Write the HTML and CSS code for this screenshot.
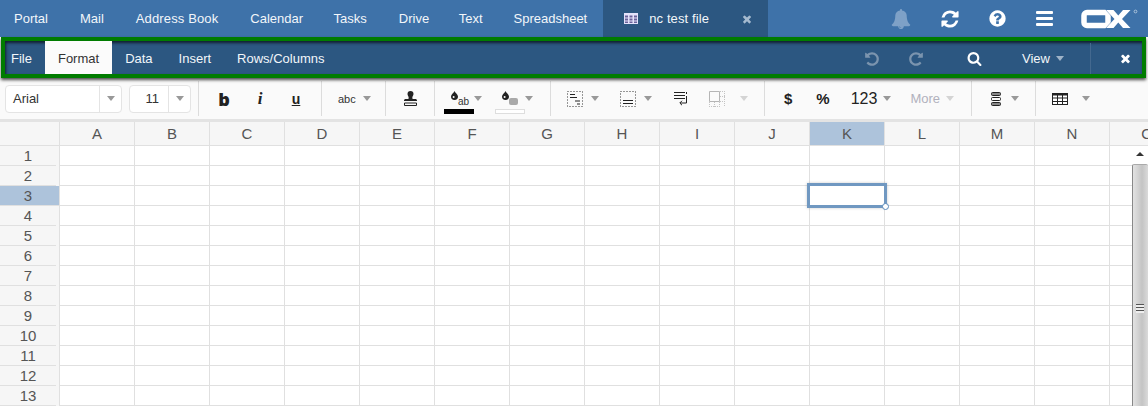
FILE: index.html
```html
<!DOCTYPE html>
<html lang="en">
<head>
<meta charset="utf-8">
<title>nc test file</title>
<link rel="stylesheet" href="styles.css">
</head>
<body>
<svg class="defs" width="0" height="0" aria-hidden="true">
  <symbol id="fa-sync" viewBox="0 0 1792 1792"><path d="M1639 1056q0 5-1 7-64 268-268 434.5t-478 166.5q-146 0-282.5-55t-243.5-157l-129 129q-19 19-45 19t-45-19-19-45v-448q0-26 19-45t45-19h448q26 0 45 19t19 45-19 45l-137 137q71 66 161 102t187 36q134 0 250-65t186-179q11-17 53-117 8-23 30-23h192q13 0 22.5 9.5t9.5 22.5zm25-800v448q0 26-19 45t-45 19h-448q-26 0-45-19t-19-45 19-45l138-138q-148-137-349-137-134 0-250 65t-186 179q-11 17-53 117-8 23-30 23h-199q-13 0-22.5-9.5t-9.5-22.5v-7q65-268 270-434.5t480-166.5q146 0 284 55.5t245 156.5l130-129q19-19 45-19t45 19 19 45z"/></symbol>
  <symbol id="fa-times" viewBox="0 0 1792 1792"><path d="M1490 1322q0 40-28 68l-136 136q-28 28-68 28t-68-28l-294-294-294 294q-28 28-68 28t-68-28l-136-136q-28-28-28-68t28-68l294-294-294-294q-28-28-28-68t28-68l136-136q28-28 68-28t68 28l294 294 294-294q28-28 68-28t68 28l136 136q28 28 28 68t-28 68l-294 294 294 294q28 28 28 68z"/></symbol>
  <symbol id="fa-undo" viewBox="0 0 1792 1792"><path d="M1664 896q0 156-61 298t-164 245-245 164-298 61q-172 0-327-72.5t-264-204.5q-7-10-6.5-22.5t8.5-20.5l137-138q10-9 25-9 16 2 23 12 73 95 179 147t225 52q104 0 198.5-40.5t163.5-109.5 109.5-163.5 40.5-198.5-40.5-198.5-109.5-163.5-163.5-109.5-198.5-40.5q-98 0-188 35.5t-160 101.5l137 138q31 30 14 69-17 40-59 40h-448q-26 0-45-19t-19-45v-448q0-42 40-59 39-17 69 14l130 129q107-101 244.5-156.5t284.5-55.5q156 0 298 61t245 164 164 245 61 298z"/></symbol>
  <symbol id="drop" viewBox="0 0 7 9"><path d="M3.500 0C3.800 1.500 7 3.300 7 5.600A3.500 3.400 0 0 1 0 5.600C0 3.300 3.200 1.500 3.500 0Z"/><circle cx="2.600" cy="6" r="1" fill="#fafafa"/></symbol>
</svg>

<header class="topbar">
  <nav class="apps">
    <a class="app">Portal</a><a class="app">Mail</a><a class="app app-book">Address Book</a><a class="app app-cal">Calendar</a><a class="app">Tasks</a><a class="app app-drive">Drive</a><a class="app app-text">Text</a><a class="app app-last">Spreadsheet</a>
    <div class="filetab">
      <svg class="tab-grid" width="14" height="11" viewBox="0 0 14 11"><rect width="14" height="11" fill="#e4e2fb"/><path d="M1 2.500h3v2H1zM5.500 2.500h3v2h-3zM10 2.500h3v2h-3zM1 5.500h3v2H1zM5.500 5.500h3v2h-3zM10 5.500h3v2h-3zM1 8.500h3v1.500H1zM5.500 8.500h3v1.500h-3zM10 8.500h3v1.500h-3z" fill="#6a6199"/></svg>
      <span class="filename">nc test file</span>
      <svg class="tab-close" width="12" height="12"><use href="#fa-times"/></svg>
    </div>
  </nav>
  <div class="sys">
    <svg class="sys-bell" width="20" height="20" viewBox="0 0 1792 1792"><path d="M912 1696q0-16-16-16-59 0-101.500-42.500t-42.500-101.500q0-16-16-16t-16 16q0 73 51.500 124.500t124.500 51.500q16 0 16-16zm816-288q0 52-38 90t-90 38h-448q0 106-75 181t-181 75-181-75-75-181h-448q-52 0-90-38t-38-90q50-42 91-88t85-119.500 74.500-158.500 50-206 19.500-260q0-152 117-282.500t307-158.500q-8-19-8-39 0-40 28-68t68-28 68 28 28 68q0 20-8 39 190 28 307 158.500t117 282.500q0 139 19.500 260t50 206 74.500 158.500 85 119.500 91 88z"/></svg>
    <svg class="sys-sync" width="20" height="20"><use href="#fa-sync"/></svg>
    <svg class="sys-help" width="19" height="19" viewBox="0 0 1792 1792"><path d="M1024 1376v-192q0-14-9-23t-23-9h-192q-14 0-23 9t-9 23v192q0 14 9 23t23 9h192q14 0 23-9t9-23zm256-672q0-88-55.500-163t-138.500-116-170-41q-243 0-371 213-15 24 8 42l132 100q7 6 19 6 16 0 25-12 53-68 86-92 34-24 86-24 48 0 85.500 26t37.500 59q0 38-20 61t-68 45q-63 28-115.500 86.500t-52.500 125.500v36q0 14 9 23t23 9h192q14 0 23-9t9-23q0-19 21.500-49.500t54.500-49.500q32-18 49-28.500t46-35 44.500-48 28-60.500 12.500-81zm384 192q0 209-103 385.500t-279.500 279.500-385.500 103-385.500-103-279.500-279.500-103-385.500 103-385.500 279.500-279.500 385.500-103 385.500 103 279.500 279.500 103 385.500z"/></svg>
    <div class="sys-menu"><i></i><i></i><i></i></div>
    <svg class="ox-logo" width="58" height="20" viewBox="0 0 58 20"><rect x="3" y="3.500" width="24" height="13" rx="3" fill="none" stroke="#fff" stroke-width="5.500"/><path d="M25 1h7.500l4.800 5.500L42 1h7.500L41 10l8.500 9H42l-4.700-5.500L32.500 19H25l8.500-9z" fill="#fff" stroke="#3e72a9" stroke-width="1" paint-order="stroke"/><circle cx="54.500" cy="2.500" r="1.400" fill="none" stroke="#cfdcea" stroke-width=".7"/></svg>
  </div>
</header>

<section class="ribbon">
  <div class="tabs">
    <a class="rtab rtab-file">File</a><a class="rtab rtab-on">Format</a><a class="rtab">Data</a><a class="rtab">Insert</a><a class="rtab">Rows/Columns</a>
  </div>
  <div class="ribbon-right">
    <svg class="dim" width="16" height="16"><use href="#fa-undo"/></svg>
    <svg class="dim redo" width="16" height="16"><use href="#fa-undo"/></svg>
    <svg class="rsearch" width="15" height="15" viewBox="0 0 1792 1792"><path d="M1216 832q0-185-131.500-316.500t-316.500-131.500-316.500 131.500-131.500 316.500 131.500 316.500 316.500 131.500 316.500-131.500 131.500-316.500zm512 832q0 52-38 90t-90 38q-54 0-90-38l-343-342q-179 124-399 124-143 0-273.500-55.500t-225-150-150-225-55.500-273.500 55.500-273.500 150-225 225-150 273.500-55.500 273.500 55.500 225 150 150 225 55.500 273.500q0 220-124 399l343 343q37 37 37 90z"/></svg>
    <span class="rview">View</span><span class="caret caret-light"></span>
    <div class="rclose"><svg width="13" height="13"><use href="#fa-times"/></svg></div>
  </div>
</section>

<section class="toolbar">
  <div class="group g-font">
    <div class="combo combo-name"><span class="combo-val">Arial</span><span class="combo-btn"><span class="caret"></span></span></div>
    <div class="combo combo-size"><span class="combo-val val-right">11</span><span class="combo-btn"><span class="caret"></span></span></div>
  </div>
  <div class="group g-style">
    <span class="sq t-b">b</span><span class="sq t-i">i</span><span class="sq t-u">u</span>
  </div>
  <div class="group g-abc"><span class="t-abc">abc</span><span class="caret"></span></div>
  <div class="group g-stamp">
    <svg width="13" height="15" viewBox="0 0 13 15"><path d="M6.500 0a3 3 0 0 1 3 3c0 1.500-1.200 2.200-1.200 4 0 .7.400 1 1 1h2c1 0 1.700.6 1.700 1.500v.5H0v-.5C0 8.600.7 8 1.700 8h2c.6 0 1-.3 1-1 0-1.800-1.200-2.500-1.200-4a3 3 0 0 1 3-3z" fill="#222"/><path d="M.5 12h12v2.500H.5z" fill="none" stroke="#222"/></svg>
  </div>
  <div class="group g-color">
    <div class="swatch">
      <div class="sw-icon"><svg class="sw-drop" width="7" height="9"><use href="#drop"/></svg><span class="sw-ab">ab</span></div>
      <span class="sw-bar sw-black"></span>
    </div>
    <span class="caret"></span>
    <div class="swatch sw-next">
      <div class="sw-icon"><svg class="sw-drop" width="7" height="9"><use href="#drop"/></svg><span class="sw-blob"></span></div>
      <span class="sw-bar sw-empty"></span>
    </div>
    <span class="caret"></span>
  </div>
  <div class="group g-cell">
    <svg class="ci" width="16" height="16" viewBox="0 0 16 16"><path d="M.5 .5h15v15H.5z" fill="none" stroke="#333" stroke-dasharray="1 2"/><path d="M3 3.500h5M3 6.500h7M8 10h5M10 13h3" stroke="#222" stroke-width="1.200"/></svg>
    <span class="caret c-near"></span>
    <svg class="ci ci-2" width="16" height="16" viewBox="0 0 16 16"><path d="M.5 .5h15v15H.5z" fill="none" stroke="#333" stroke-dasharray="1 2"/><path d="M3 9.500h10M3 12.500h10" stroke="#222" stroke-width="1.200"/></svg>
    <span class="caret c-near"></span>
    <svg class="ci ci-3" width="14" height="16" viewBox="0 0 14 16"><path d="M0 1.500h11M0 4.500h11M0 7.500h11" stroke="#222" stroke-width="1.100"/><path d="M12.500 1v2M12.500 5v7H6M8 9.800 5.800 12 8 14.200" fill="none" stroke="#222"/></svg>
    <svg class="ci ci-4" width="16" height="16" viewBox="0 0 16 16"><path d="M.5 .5h10v10H.5z" fill="none" stroke="#b5b5b5"/><path d="M11 .5h5M11 5.500h5M11 10.500h5M11 15.500H0M.5 11v5M5.500 11v5M10.500 11v5M15.500 0v16" fill="none" stroke="#c4c4c4" stroke-dasharray="1 1"/></svg>
    <span class="caret caret-dim c-far"></span>
  </div>
  <div class="group g-num">
    <span class="t-sym t-dollar">$</span><span class="t-sym t-pct">%</span><span class="t-123">123</span><span class="caret"></span><span class="t-more">More</span><span class="caret caret-dim"></span>
  </div>
  <div class="group g-rows">
    <svg width="10" height="14" viewBox="0 0 10 14"><rect x=".5" y=".5" width="9" height="3" rx="1" fill="#888" stroke="#222"/><rect x=".5" y="5.500" width="9" height="3" rx="1" fill="#fafafa" stroke="#222"/><rect x=".5" y="10.500" width="9" height="3" rx="1" fill="#888" stroke="#222"/></svg>
    <span class="caret"></span>
  </div>
  <div class="group g-table">
    <svg width="16" height="12" viewBox="0 0 16 12"><rect x=".5" y=".5" width="15" height="11" fill="#fff" stroke="#222"/><path d="M0 1.500h16" stroke="#222" stroke-width="2"/><path d="M0 5h16M0 8.500h16M5.500 0v12M10.500 0v12" stroke="#222"/></svg>
    <span class="caret"></span>
  </div>
</section>

<main class="sheet">
  <div class="colhead">
    <div class="corner"></div>
    <div class="col">A</div><div class="col">B</div><div class="col">C</div><div class="col">D</div><div class="col">E</div><div class="col">F</div><div class="col">G</div><div class="col">H</div><div class="col">I</div><div class="col">J</div><div class="col col-on">K</div><div class="col">L</div><div class="col">M</div><div class="col">N</div><div class="col">O</div>
  </div>
  <div class="sheet-body">
    <div class="rowhead">
      <div class="row">1</div><div class="row">2</div><div class="row row-on">3</div><div class="row">4</div><div class="row">5</div><div class="row">6</div><div class="row">7</div><div class="row">8</div><div class="row">9</div><div class="row">10</div><div class="row">11</div><div class="row">12</div><div class="row">13</div>
    </div>
    <div class="cells">
      <div class="selection"><span class="handle"></span></div>
    </div>
    <div class="scrollbar">
      <div class="sb-up"><span class="sb-arrow"></span></div>
      <div class="sb-thumb"><div class="sb-grip"></div></div>
    </div>
  </div>
</main>
</body>
</html>
```

FILE: styles.css
```css
* { box-sizing: border-box; }
html, body { margin: 0; height: 100%; overflow: hidden; }
body { width: 1148px; height: 406px; font-family: "Liberation Sans", Arial, sans-serif; font-size: 13px; background: #fff; color: #333; }
.defs { position: absolute; }

/* top bar */
.topbar { display: flex; justify-content: space-between; height: 37px; background: #3e72a9; color: #fff; }
.apps { display: flex; align-items: center; padding-left: 14px; }
.app { margin-right: 32px; white-space: nowrap; color: #f2f6fa; }
.app-book { letter-spacing: .13px; }
.app-cal { margin-right: 30.5px; }
.app-drive { margin-right: 29.5px; }
.app-text { margin-right: 31px; }
.app-last { margin-right: 16px; }
.filetab { display: flex; align-items: center; width: 165px; height: 37px; background: #2c5781; padding-left: 21px; }
.filename { margin-left: 11px; color: #f2f6fa; letter-spacing: .1px; }
.tab-close { margin-left: 32px; fill: #a5bacf; }
.sys { display: flex; align-items: center; padding-right: 9px; }
.sys svg { fill: #fff; display: block; }
.sys .sys-bell { fill: #7ea1c7; }
.sys-sync { margin-left: 29px; }
.sys-help { margin-left: 28px; }
.sys-menu { display: flex; flex-direction: column; gap: 3px; width: 17px; margin-left: 29px; }
.sys-menu i { height: 3px; background: #fff; border-radius: 1px; }
.ox-logo { margin-left: 28px; }

/* ribbon */
.ribbon { position: relative; display: flex; justify-content: space-between; height: 41px; margin: 0 2px 0 1px; background: #2c5781; border: 4px solid #007c00; box-shadow: 0 2px 3px rgba(0,0,0,.7), inset 1px 2px 3px rgba(0,0,0,.65); color: #f2f6fa; }
.tabs { display: flex; align-items: stretch; }
.rtab { display: flex; align-items: center; padding: 1px 13px 0; }
.rtab-file { padding: 1px 13px 0 6px; }
.rtab-on { background: #fbfbfb; color: #333; }
.ribbon-right { display: flex; align-items: center; padding-top: 2px; }
.dim { fill: #7b94ae; }
.redo { transform: scaleX(-1); margin-left: 28px; }
.rsearch { fill: #fff; margin-left: 43px; }
.rview { margin-left: 40px; }
.caret { display: inline-block; flex: none; width: 0; height: 0; border-left: 4.5px solid transparent; border-right: 4.5px solid transparent; border-top: 5px solid #999; }
.caret-light { border-top-color: #9fb3c8; margin-left: 6px; }
.caret-dim { border-top-color: #d4d4d4; }
.rclose { display: flex; align-items: center; height: 31px; margin-left: 26px; padding-left: 28px; padding-right: 10px; border-left: 1px solid #44698f; fill: #fff; }

/* toolbar */
.toolbar { display: flex; align-items: center; height: 44px; background: #fafafa; border-bottom: 3px solid #e3e3e3; }
.group { display: flex; align-items: center; height: 35px; border-right: 1px solid #dcdcdc; }
.g-font { width: 199px; padding-left: 5px; gap: 7px; }
.combo { display: flex; align-items: stretch; height: 28px; background: #fff; border: 1px solid #e4e4e4; border-radius: 4px; font-size: 13px; color: #333; }
.combo-name { width: 117px; }
.combo-size { width: 62px; }
.combo-val { flex: 1; display: flex; align-items: center; padding-left: 7px; }
.val-right { justify-content: flex-end; padding-right: 9px; }
.combo-btn { display: flex; align-items: center; justify-content: center; width: 22px; border-left: 1px solid #e4e4e4; }
.g-style { width: 123px; padding-left: 7px; }
.sq { width: 36px; text-align: center; color: #222; }
.t-b { font-family: "Open Sans", sans-serif; font-weight: 800; font-size: 18px; line-height: 20px; }
.t-i { font-family: "Liberation Serif", serif; font-style: italic; font-weight: 700; font-size: 17px; }
.t-u { font-weight: 700; font-size: 14px; text-decoration: underline; }
.g-abc { width: 64px; padding-left: 16px; gap: 7px; }
.t-abc { font-size: 11px; color: #333; }
.g-stamp { width: 49px; justify-content: center; }
.g-color { width: 116px; padding-left: 9px; }
.swatch { display: flex; flex-direction: column; align-items: center; width: 30px; height: 35px; }
.sw-next { margin-left: 13px; }
.sw-icon { display: flex; width: 16px; height: 28px; padding-top: 10px; }
.sw-drop { fill: #222; flex: none; }
.sw-ab { font-size: 10px; line-height: 11px; margin-top: 5px; color: #333; }
.sw-blob { width: 9px; height: 7px; margin-top: 7px; background: #a9a9a9; border-radius: 2px; }
.sw-bar { display: block; flex: none; width: 30px; height: 5px; }
.sw-black { background: #000; }
.sw-empty { border: 1px solid #dedede; background: #fff; }
.g-cell { width: 214px; padding-left: 16px; }
.c-near { margin-left: 8px; }
.ci-2 { margin-left: 21px; }
.ci-3 { margin-left: 22px; }
.ci-4 { margin-left: 21px; }
.c-far { margin-left: 15px; }
.g-num { width: 207px; padding-left: 19px; color: #222; }
.t-sym { font-weight: 700; font-size: 15px; }
.t-pct { margin-left: 24px; }
.t-123 { margin-left: 21px; font-size: 16px; }
.g-num .caret { margin-left: 6px; }
.t-more { margin-left: 19px; font-size: 13px; color: #b1b1bd; }
.g-rows { width: 64px; padding-left: 19px; gap: 10px; }
.g-table { flex: 1; padding-left: 16px; gap: 14px; border-right: 0; }

/* sheet */
.sheet { color: #555; }
.colhead { display: flex; height: 24px; overflow: hidden; background: #f6f6f6; border-bottom: 1px solid #e0e0e0; }
.corner { flex: none; width: 60px; border-right: 1px solid #e0e0e0; }
.col { flex: none; width: 75px; border-right: 1px solid #e0e0e0; font-size: 15px; line-height: 23px; text-align: center; }
.col-on { background: #adc3db; }
.sheet-body { display: flex; height: 260px; overflow: hidden; }
.rowhead { flex: none; width: 60px; background: #f6f6f6; border-right: 1px solid #e0e0e0; }
.row { height: 20px; border-bottom: 1px solid #e0e0e0; font-size: 15px; line-height: 19px; text-align: center; margin-right: 3px; }
.row-on { background: #adc3db; margin-right: 0; padding-right: 3px; }
.cells { position: relative; flex: none; width: 1072px; background-image: repeating-linear-gradient(to right, transparent 0 74px, #e0e0e0 74px 75px), repeating-linear-gradient(to bottom, transparent 0 19px, #e0e0e0 19px 20px); }
.selection { position: absolute; left: 747px; top: 37px; width: 80px; height: 25px; border: 3px solid #7098c1; box-shadow: 0 0 3px rgba(0,0,0,.2); }
.handle { position: absolute; right: -5px; bottom: -5px; width: 7px; height: 7px; background: #fff; border: 1px solid #5a8abb; border-radius: 50%; }
.scrollbar { flex: none; width: 16px; background: #fff; }
.sb-up { display: flex; justify-content: center; padding-top: 6px; height: 18px; }
.sb-arrow { width: 0; height: 0; border-left: 4px solid transparent; border-right: 4px solid transparent; border-bottom: 4px solid #333; }
.sb-thumb { height: 260px; padding-top: 139px; border-left: 1px solid #888; border-top: 1px solid #aaa; border-radius: 2px 2px 0 0; background: linear-gradient(to right, #e2e2e2, #d4d4d4 30%, #c4c4c4 60%, #dadada); }
.sb-grip { width: 8px; height: 9px; margin-left: 3px; background: repeating-linear-gradient(to bottom, #555 0 1px, #eee 1px 3px); }
```
